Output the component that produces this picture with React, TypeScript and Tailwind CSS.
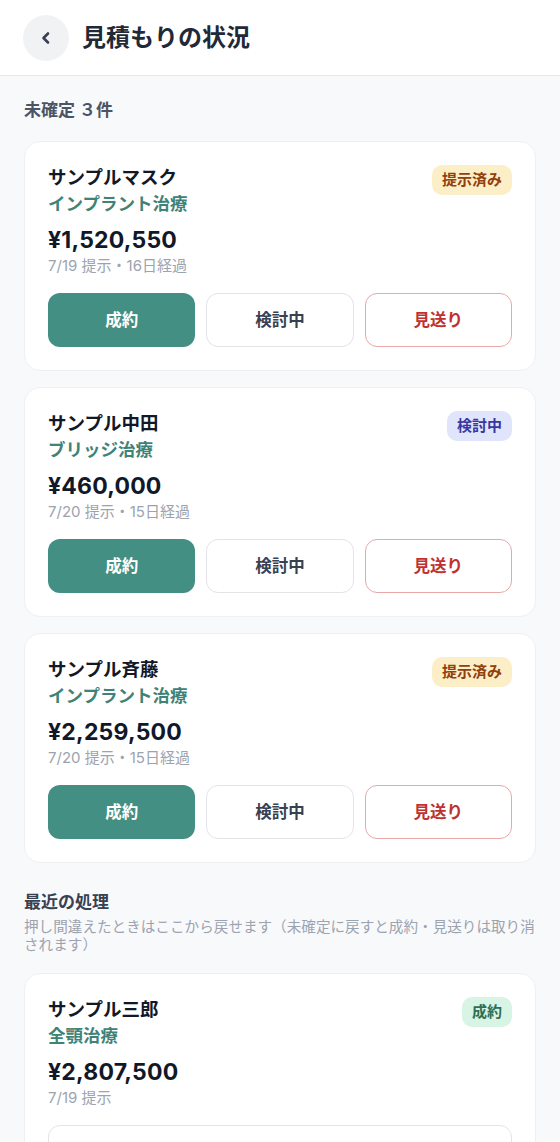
import React from "react";

const FONT = { fontFamily: 'Inter, "Noto Sans CJK JP", "Noto Sans", sans-serif' };

type Badge = { label: string; cls: string };

const pending = [
  { name: "サンプルマスク", kind: "インプラント治療", price: "¥1,520,550", date: "7/19 提示", days: "16日経過", badge: { label: "提示済み", cls: "bg-[#fcefc7] text-[#92400e]" } },
  { name: "サンプル中田", kind: "ブリッジ治療", price: "¥460,000", date: "7/20 提示", days: "15日経過", badge: { label: "検討中", cls: "bg-[#e0e5fc] text-[#3b37a0]" } },
  { name: "サンプル斉藤", kind: "インプラント治療", price: "¥2,259,500", date: "7/20 提示", days: "15日経過", badge: { label: "提示済み", cls: "bg-[#fcefc7] text-[#92400e]" } },
];

function CardTop({ name, kind, price, date, days, badge }: { name: string; kind: string; price: string; date: string; days?: string; badge: Badge }) {
  return (
    <div className="flex items-start justify-between">
      <div className="flex flex-col">
        <div className="text-[18.5px] leading-[24px] font-bold text-[#111827]">{name}</div>
        <div className="mt-[3px] text-[17.5px] leading-[24px] font-semibold text-[#3f8377]">{kind}</div>
        <div className="mt-[9px] text-[23px] leading-[30px] font-bold text-[#111827] tracking-[0.2px]">{price}</div>
        <div className="mt-[1px] h-[20px] text-[15px] leading-[20px] text-[#9ca3af] whitespace-nowrap">
          {date}
          {days && (
            <>
              <span className="font-['Noto_Sans_CJK_JP'] leading-none">・</span>
              {days}
            </>
          )}
        </div>
      </div>
      <div className={`h-[30px] px-[10px] rounded-[10px] flex items-center text-[15px] font-bold ${badge.cls}`}>
        {badge.label}
      </div>
    </div>
  );
}

export default function App() {
  return (
    <div style={FONT} className="min-h-[1142px] w-[560px] bg-[#f8f9fb]">
      <header className="h-[76px] bg-white border-b border-[#e5e7eb] flex items-center pl-[23px] gap-[13px]">
        <div className="w-[46px] h-[46px] rounded-full bg-[#f1f2f4] flex items-center justify-center">
          <svg width="14" height="14" viewBox="0 0 14 14" fill="none">
            <path d="M9 2.5L4.5 7L9 11.5" stroke="#374151" strokeWidth="2.6" strokeLinecap="round" strokeLinejoin="round" />
          </svg>
        </div>
        <h1 className="text-[24px] font-bold text-[#1f2937] leading-none">見積もりの状況</h1>
      </header>

      <main className="px-[24px] pt-[22px]">
        <div className="text-[17px] leading-[24px] font-bold text-[#4b5563]">未確定 ３件</div>
        <div className="mt-[19px] flex flex-col gap-[16px]">
          {pending.map((p) => (
            <div key={p.name} className="bg-white rounded-[16px] border border-[#eef0f3] px-[23px] py-[23px]">
              <CardTop {...p} />
              <div className="mt-[17px] grid grid-cols-3 gap-[11px]">
                <button className="h-[54px] rounded-[12px] bg-[#438f84] text-white text-[16.5px] font-bold">成約</button>
                <button className="h-[54px] rounded-[12px] bg-white border border-[#e2e4e8] text-[#374151] text-[16.5px] font-bold">検討中</button>
                <button className="h-[54px] rounded-[12px] bg-white border border-[#e9a7a7] text-[#c0312f] text-[16.5px] font-bold">見送り</button>
              </div>
            </div>
          ))}
        </div>

        <div className="mt-[27px] text-[17px] leading-[24px] font-bold text-[#374151]">最近の処理</div>
        <p className="mt-[4px] text-[14.6px] leading-[18px] text-[#9ca3af]">
          押し間違えたときはここから戻せます（未確定に戻すと成約・見送りは取り消されます）
        </p>

        <div className="mt-[19px] bg-white rounded-[16px] border border-[#eef0f3] px-[23px] py-[23px]">
          <CardTop
            name="サンプル三郎"
            kind="全顎治療"
            price="¥2,807,500"
            date="7/19 提示"
            badge={{ label: "成約", cls: "bg-[#d8f4e4] text-[#2f6f55]" }}
          />
          <button className="mt-[17px] w-full h-[54px] rounded-[12px] bg-white border border-[#e2e4e8] text-[#374151] text-[16.5px] font-bold flex items-center justify-center gap-[8px]">
            <svg width="18" height="18" viewBox="0 0 24 24" fill="none" stroke="#6b7280" strokeWidth="2.2" strokeLinecap="round" strokeLinejoin="round">
              <path d="M9 14L4 9l5-5" />
              <path d="M4 9h10.5a5.5 5.5 0 0 1 0 11H11" />
            </svg>
            未確定に戻す
          </button>
        </div>
        <div className="h-[24px]" />
      </main>
    </div>
  );
}
